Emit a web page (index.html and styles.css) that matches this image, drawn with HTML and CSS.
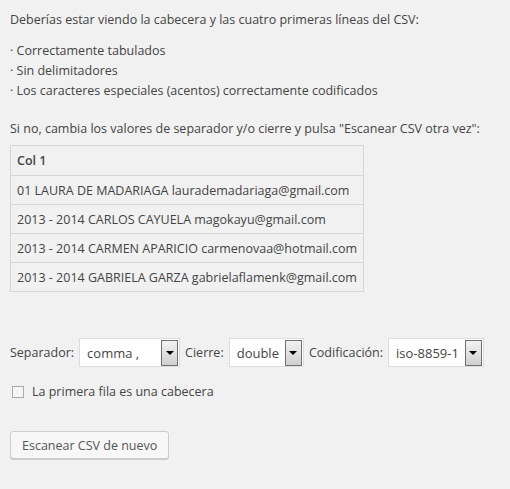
FILE: index.html
```html
<!DOCTYPE html>
<html lang="es">
<head>
  <meta charset="UTF-8" />
  <title>Importar CSV</title>
  <link rel="stylesheet" href="styles.css">
</head>
<body>
  <div class="wrap">
    <p class="intro">Deberías estar viendo la cabecera y las cuatro primeras líneas del CSV:</p>
    <ul class="checks">
      <li>· Correctamente tabulados</li>
      <li>· Sin delimitadores</li>
      <li>· Los caracteres especiales (acentos) correctamente codificados</li>
    </ul>
    <p class="hint">Si no, cambia los valores de separador y/o cierre y pulsa "Escanear CSV otra vez":</p>

    <table class="preview">
      <tr><th>Col 1</th></tr>
      <tr><td>01 LAURA DE MADARIAGA laurademadariaga@gmail.com</td></tr>
      <tr><td>2013 - 2014 CARLOS CAYUELA magokayu@gmail.com</td></tr>
      <tr><td>2013 - 2014 CARMEN APARICIO carmenovaa@hotmail.com</td></tr>
      <tr><td>2013 - 2014 GABRIELA GARZA gabrielaflamenk@gmail.com</td></tr>
    </table>

    <div class="options">
      <label>Separador:</label>
      <span class="select sep"><span class="val">comma ,</span><span class="arrow"></span></span>
      <label>Cierre:</label>
      <span class="select"><span class="val">double</span><span class="arrow"></span></span>
      <label>Codificación:</label>
      <span class="select"><span class="val">iso-8859-1</span><span class="arrow"></span></span>
    </div>

    <label class="check"><span class="box"></span>La primera fila es una cabecera</label>

    <button class="btn">Escanear CSV de nuevo</button>
  </div>
</body>
</html>
```

FILE: styles.css
```css
* {
  margin: 0; padding: 0;
  box-sizing: border-box;
}
body {
  background-color: #f1f1f1;
  color: #444;
  font-family: 'Open Sans', sans-serif;
  font-size: 12.5px;
}
.wrap {
  padding: 10px 10px;
}
.intro {
  line-height: 20px;
  margin-bottom: 11px;
}
.checks {
  list-style: none;
  line-height: 20px;
  margin-bottom: 18px;
}
.hint {
  line-height: 20px;
  margin-bottom: 6px;
}

.preview {
  border-collapse: collapse;
  border: 1px solid #d6d6d6;
  margin-bottom: 46px;
}
.preview th,
.preview td {
  border: 1px solid #d6d6d6;
  text-align: left;
  padding: 0 6px;
  height: 29px;
  white-space: nowrap;
}
.preview th {
  font-weight: 600;
  height: 30px;
}

.options {
  display: flex;
  align-items: center;
  gap: 5px;
  margin-bottom: 16px;
}
.select {
  display: flex;
  align-items: center;
  height: 29px;
  background: #fff;
  border: 1px solid #ddd;
  padding: 1px;
}
.select .val {
  padding: 0 6px;
  font-size: 13px;
}
.select.sep .val {
  width: 80px;
}
.arrow {
  width: 17px;
  height: 26px;
  border: 1px solid #707070;
  background: linear-gradient(#f2f2f2, #cfcfcf);
  display: flex;
  align-items: center;
  justify-content: center;
}
.arrow::after {
  content: "";
  border-left: 4px solid transparent;
  border-right: 4px solid transparent;
  border-top: 4px solid #000;
}

.check {
  display: flex;
  align-items: center;
  gap: 8px;
  margin-left: 2px;
  margin-bottom: 31px;
}
.box {
  width: 12px;
  height: 12px;
  border: 1px solid #aaa;
  background: #f6f6f6;
}

.btn {
  font-family: inherit;
  font-size: 12.5px;
  color: #555;
  height: 28px;
  padding: 0 11px;
  background: #f7f7f7;
  border: 1px solid #ccc;
  border-radius: 3px;
  box-shadow: 0 1px 0 #ccc;
}
```
